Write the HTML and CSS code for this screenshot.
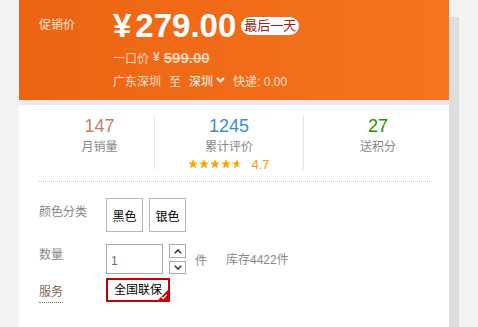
FILE: index.html
```html
<!DOCTYPE html>
<html lang="zh-CN">
<head>
<meta charset="utf-8">
<title>商品</title>
<link rel="stylesheet" href="styles.css">
</head>
<body>
<div class="page">
  <div class="main">
    <section class="promo">
      <div class="promo-label">促销价</div>
      <div class="promo-info">
        <div class="price-line">
          <span class="yen">¥</span><span class="price">279.00</span><span class="badge">最后一天</span>
        </div>
        <div class="orig-line">
          <span>一口价</span><span class="orig-yen">¥</span><del class="orig">599.00</del>
        </div>
        <div class="ship-line">
          <span>广东深圳</span><span>至</span>
          <span class="city">深圳<svg class="chev" width="9" height="6" viewBox="0 0 9 6"><polyline points="1,1 4.5,4.5 8,1" fill="none" stroke="#fff" stroke-width="2"/></svg></span>
          <span>快递: 0.00</span>
        </div>
      </div>
    </section>
    <div class="strip"></div>
    <section class="body">
      <div class="stats">
        <div class="stat stat-first">
          <div class="num num-sales">147</div>
          <div class="lbl">月销量</div>
        </div>
        <div class="stat">
          <div class="num num-rev">1245</div>
          <div class="lbl">累计评价</div>
          <div class="rating">
            <svg width="55" height="10" viewBox="0 0 55 10">
              <defs>
                <linearGradient id="half" x1="0" x2="1" y1="0" y2="0">
                  <stop offset="0.6" stop-color="#f7a600"/>
                  <stop offset="0.6" stop-color="#d6d6d6"/>
                </linearGradient>
                <polygon id="st" points="5,0 6.3,3.5 10,3.5 7,5.8 8.2,9.6 5,7.3 1.8,9.6 3,5.8 0,3.5 3.7,3.5"/>
              </defs>
              <use href="#st" x="0" fill="#f7a600"/>
              <use href="#st" x="11" fill="#f7a600"/>
              <use href="#st" x="22" fill="#f7a600"/>
              <use href="#st" x="33" fill="#f7a600"/>
              <use href="#st" x="44" fill="url(#half)"/>
            </svg>
            <span class="score">4.7</span>
          </div>
        </div>
        <div class="stat">
          <div class="num num-pts">27</div>
          <div class="lbl">送积分</div>
        </div>
      </div>

      <div class="opts">
        <div class="opt-row">
          <div class="opt-label opt-label-color">颜色分类</div>
          <div class="skus">
            <div class="sku">黑色</div>
            <div class="sku">银色</div>
          </div>
        </div>
        <div class="opt-row row-qty">
          <div class="opt-label opt-label-qty">数量</div>
          <div class="qty-input">1</div>
          <div class="arrows">
            <div class="arrow arrow-up"><svg width="8" height="5" viewBox="0 0 8 5"><polyline points="0.8,4.2 4,1 7.2,4.2" fill="none" stroke="#333" stroke-width="1.6"/></svg></div>
            <div class="arrow arrow-down"><svg width="8" height="5" viewBox="0 0 8 5"><polyline points="0.8,0.8 4,4 7.2,0.8" fill="none" stroke="#333" stroke-width="1.6"/></svg></div>
          </div>
          <div class="unit">件</div>
          <div class="stock">库存4422件</div>
        </div>
        <div class="opt-row row-svc">
          <div class="opt-label opt-label-svc"><span class="svc-name">服务</span></div>
          <div class="svc">全国联保<svg class="svc-check" width="10" height="10" viewBox="0 0 10 10"><polygon points="10,0 10,10 0,10" fill="#c40000"/><polyline points="3.6,7 5.4,8.6 8.6,4.6" fill="none" stroke="#fff" stroke-width="1.3"/></svg></div>
        </div>
      </div>
    </section>
  </div>
  <div class="rail"></div>
</div>
</body>
</html>
```
FILE: styles.css
```css
* { box-sizing: border-box; }
html, body { margin: 0; padding: 0; }
body {
  background: #f3f3f3;
  font-family: "Liberation Sans", Arial, "Noto Sans CJK SC", sans-serif;
  height: 327px;
  overflow: hidden;
}
.page {
  display: flex;
  padding-left: 19px;
  height: 327px;
}
.main {
  width: 430px;
  background: #fff;
  height: 100%;
}
.rail {
  width: 10px;
  margin-top: 17px;
  background: #dedede;
}

/* promo header */
.promo {
  height: 100px;
  background: linear-gradient(to right, #ec6413, #f5741f);
  padding: 10px 0 0 20px;
  display: flex;
}
.promo-label {
  width: 74px;
  font-size: 12px;
  line-height: 18px;
  margin-top: 6px;
  color: #fde6d4;
}
.price-line {
  display: flex;
  align-items: center;
  height: 32px;
}
.yen, .price {
  font-family: "Liberation Sans", Arial, sans-serif;
  font-size: 33px;
  font-weight: bold;
  line-height: 32px;
  color: #fff;
}
.yen { margin-right: 4px; }
.badge {
  margin-left: 5px;
  height: 18px;
  line-height: 18px;
  padding: 0 3px;
  border-radius: 9px;
  background: #fff;
  color: #a3200b;
  font-size: 13px;
}
.orig-line {
  margin-top: 6px;
  height: 18px;
  display: flex;
  align-items: center;
  gap: 4px;
  color: #fcd6ba;
  font-size: 12px;
}
.orig-yen { font-size: 12px; font-weight: bold; }
.orig {
  font-family: "Liberation Sans", Arial, sans-serif;
  font-size: 15px;
  font-weight: bold;
  text-decoration: line-through;
}
.ship-line {
  margin-top: 5px;
  height: 18px;
  display: flex;
  align-items: center;
  gap: 8px;
  font-size: 12px;
  color: #fde0ca;
}
.city {
  display: flex;
  align-items: center;
  gap: 3px;
  color: #fff;
}

.strip {
  height: 5px;
  background: #e8e8e8;
}

/* body */
.body {
  padding: 0 17px 0 20px;
}
.stats {
  display: flex;
  padding-top: 10px;
  padding-left: 6px;
  margin-right: -20px;
}
.stat {
  width: 149px;
  height: 55px;
  padding-top: 1px;
  text-align: center;
  border-left: 1px solid #e8e8e8;
}
.stat-first {
  width: 109px;
  border-left: none;
}
.num {
  font-size: 18px;
  line-height: 20px;
}
.num-sales { color: #c77f62; }
.num-rev { color: #3a8fd0; }
.num-pts { color: #1f8f00; }
.lbl {
  font-size: 12px;
  line-height: 16px;
  margin-top: 3px;
  color: #888;
}
.rating {
  margin-top: 2px;
  height: 14px;
  display: flex;
  justify-content: center;
  align-items: center;
}
.score {
  margin-left: 8px;
  font-size: 13px;
  color: #f39c12;
}

.opts {
  margin-top: 11px;
  border-top: 1px dotted #c8c8c8;
  border-bottom: 1px dotted #c8c8c8;
  padding: 16px 0 24px;
}
.opt-row {
  display: flex;
  align-items: flex-start;
}
.opt-label {
  width: 67px;
  flex: none;
  font-size: 12px;
  line-height: 16px;
  color: #888;
}
.opt-label-color { margin-top: 6px; }
.skus {
  display: flex;
  gap: 6px;
}
.sku {
  width: 37px;
  height: 34px;
  border: 1px solid #b8b8b8;
  display: flex;
  align-items: center;
  justify-content: center;
  font-size: 12px;
  color: #000;
}
.row-qty { margin-top: 12px; }
.opt-label-qty { margin-top: 3px; }
.qty-input {
  width: 57px;
  height: 30px;
  border: 1px solid #aaa;
  padding: 8px 4px 0;
  font-size: 12px;
  line-height: 16px;
  color: #7a5c91;
}
.arrows {
  margin-left: 6px;
  display: flex;
  flex-direction: column;
  gap: 3px;
}
.arrow {
  width: 17px;
  border: 1px solid #aaa;
  display: flex;
  align-items: center;
  justify-content: center;
}
.arrow-up { height: 14px; }
.arrow-down { height: 13px; }
.unit {
  margin-left: 9px;
  margin-top: 9px;
  font-size: 12px;
  line-height: 16px;
  color: #888;
}
.stock {
  margin-left: 19px;
  margin-top: 8px;
  font-size: 12px;
  line-height: 16px;
  color: #888;
}
.row-svc { margin-top: 4px; }
.opt-label-svc { margin-top: 6px; }
.svc-name {
  display: inline-block;
  padding-bottom: 2px;
  border-bottom: 1px dotted #8a7a6a;
  color: #86654c;
}
.svc {
  position: relative;
  height: 24px;
  border: 2px solid #c40000;
  padding: 0 6px;
  font-size: 12px;
  line-height: 20px;
  color: #000;
}
.svc-check {
  position: absolute;
  right: 0;
  bottom: 0;
}
```
